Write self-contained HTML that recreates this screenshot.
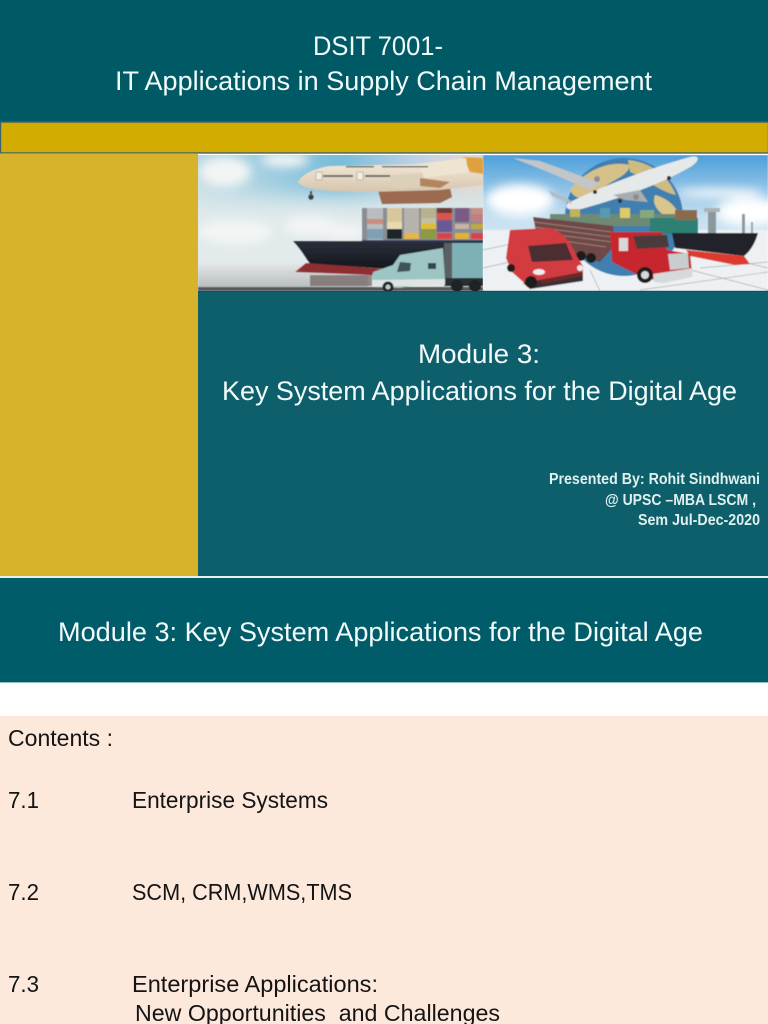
<!DOCTYPE html>
<html lang="en">
<head>
<meta charset="utf-8">
<title>DSIT 7001 - Module 3</title>
<style>
html,body{margin:0;padding:0;background:#fff;width:768px;height:1024px;overflow:hidden}
svg{display:block}
text{font-family:"Liberation Sans",sans-serif}
.w{fill:#f2fafa;font-size:27px}
.s{fill:#dff0ee;font-size:15.5px;font-weight:bold}
.k{fill:#141414;font-size:23.5px}
</style>
</head>
<body>
<svg width="768" height="1024" viewBox="0 0 768 1024" xmlns="http://www.w3.org/2000/svg">
<defs>
<filter id="b1" x="-5%" y="-5%" width="110%" height="110%"><feGaussianBlur stdDeviation="0.6"/></filter>
<filter id="b4" x="-30%" y="-30%" width="160%" height="160%"><feGaussianBlur stdDeviation="5"/></filter>
<filter id="b8" x="-20%" y="-60%" width="140%" height="220%"><feGaussianBlur stdDeviation="9"/></filter>
<linearGradient id="sky1" x1="0" y1="0" x2="0" y2="1"><stop offset="0" stop-color="#b5d6e2"/><stop offset=".45" stop-color="#dfe9eb"/><stop offset="1" stop-color="#e6eaeb"/></linearGradient>
<linearGradient id="sky1b" x1="0" y1="0" x2="1" y2="0"><stop offset="0" stop-color="#7fc0da" stop-opacity="0"/><stop offset=".5" stop-color="#6db9d8" stop-opacity=".9"/><stop offset=".8" stop-color="#c9d3e6" stop-opacity=".8"/><stop offset="1" stop-color="#f4d9c8" stop-opacity=".9"/></linearGradient>
<linearGradient id="sky2" x1="0" y1="0" x2="0" y2="1"><stop offset="0" stop-color="#4e9fda"/><stop offset=".45" stop-color="#c4dff0"/><stop offset="1" stop-color="#f2f5f7"/></linearGradient>
<linearGradient id="hull" x1="0" y1="0" x2="0" y2="1"><stop offset="0" stop-color="#2b2f3a"/><stop offset="1" stop-color="#12151c"/></linearGradient>
<linearGradient id="plane" x1="0" y1="0" x2="0" y2="1"><stop offset="0" stop-color="#f1e7d6"/><stop offset="1" stop-color="#d6c5ad"/></linearGradient>
<linearGradient id="sea" x1="0" y1="0" x2="0" y2="1"><stop offset="0" stop-color="#e6e9ea"/><stop offset="1" stop-color="#b9bdbe"/></linearGradient>
<clipPath id="c1"><rect x="198" y="155" width="285" height="136"/></clipPath>
<clipPath id="c2"><rect x="483" y="155" width="285" height="136"/></clipPath>
</defs>

<!-- backgrounds -->
<rect x="0" y="0" width="768" height="122" fill="#005a66"/>
<rect x="0.5" y="122" width="768" height="31" fill="#d3ac02" stroke="#3e6270" stroke-width="1.4"/>
<rect x="0" y="154" width="198" height="423" fill="#d7b22b"/>
<rect x="198" y="291" width="570" height="286" fill="#0e5f6c"/>
<rect x="198" y="290" width="570" height="2" fill="#0a5460"/>
<rect x="0" y="576" width="768" height="2" fill="#e6f0f0"/>
<rect x="0" y="578" width="768" height="104" fill="#005c68"/>
<rect x="0" y="682" width="768" height="1" fill="#8fc0cc"/>
<rect x="0" y="716" width="768" height="308" fill="#fde9dc"/>

<!-- left picture -->
<g clip-path="url(#c1)">
<rect x="198" y="155" width="285" height="136" fill="url(#sky1)"/>
<rect x="198" y="135" width="285" height="60" fill="url(#sky1b)" filter="url(#b8)"/>
<g filter="url(#b1)">
<g filter="url(#b4)" fill="#f3f5f4">
<ellipse cx="225" cy="172" rx="26" ry="15"/><ellipse cx="285" cy="160" rx="24" ry="7"/>
<ellipse cx="235" cy="232" rx="38" ry="12"/><ellipse cx="310" cy="226" rx="26" ry="10"/><ellipse cx="345" cy="232" rx="22" ry="8"/>
</g>
<rect x="198" y="262" width="170" height="25" fill="url(#sea)"/>
<rect x="198" y="287" width="285" height="4" fill="#54595c"/>
<!-- plane -->
<path d="M378 190 L450 188 L452 197 L440 203 L382 204Z" fill="#9b6a50"/>
<path d="M298 182 C302 174 315 168 330 166 L483 163 L483 185 L440 190 L370 192 C330 192 302 190 298 182Z" fill="url(#plane)"/>
<path d="M463 157 L483 158 L483 174 L470 172Z" fill="#e0a13c"/>
<path d="M417 164 L466 158 L468 172 L425 178Z" fill="#eee4d2"/>
<path d="M390 175 L423 173 L423 187 L392 188Z" fill="#ddd0bb"/>
<path d="M420 178 L450 182 L440 188 L420 186Z" fill="#b4835f"/>
<rect x="323" y="175" width="30" height="2" fill="#6c6a64"/><rect x="365" y="175" width="25" height="2" fill="#6c6a64"/>
<rect x="346" y="166" width="28" height="1.5" fill="#6c6a64"/><rect x="382" y="166" width="46" height="1.5" fill="#6c6a64"/>
<rect x="316" y="172" width="6" height="8" fill="#f4eee2" stroke="#8d877a" stroke-width=".5"/>
<rect x="357" y="172" width="6" height="8" fill="#f4eee2" stroke="#8d877a" stroke-width=".5"/>
<circle cx="311" cy="197" r="2.6" fill="#3a3c3e"/><rect x="310" y="191" width="2" height="5" fill="#555"/>
<!-- containers -->
<rect x="362" y="208" width="121" height="32" fill="#8a8d94"/>
<rect x="367" y="208" width="16" height="32" fill="#b9bdc0"/><rect x="367" y="219" width="16" height="5" fill="#c98e80"/><rect x="367" y="229" width="16" height="10" fill="#7fa0b5"/>
<rect x="387" y="208" width="15" height="14" fill="#d9c79c"/><rect x="387" y="222" width="15" height="7" fill="#e9dab0"/><rect x="387" y="229" width="15" height="10" fill="#1d2529"/>
<rect x="404" y="208" width="15" height="31" fill="#b5b3ac"/><rect x="404" y="233" width="15" height="6" fill="#e5b544"/>
<rect x="421" y="208" width="15" height="10" fill="#b9b08f"/><rect x="421" y="218" width="15" height="5" fill="#c0c2a4"/><rect x="421" y="223" width="15" height="6" fill="#e0bc3e"/><rect x="421" y="229" width="15" height="10" fill="#8d9a45"/>
<rect x="437" y="208" width="15" height="7" fill="#6d3d36"/><rect x="437" y="213" width="15" height="7" fill="#d9534f"/><rect x="437" y="220" width="15" height="12" fill="#6b5a93"/><rect x="437" y="233" width="15" height="6" fill="#d9434a"/>
<rect x="455" y="208" width="14" height="14" fill="#7b5a86"/><rect x="455" y="224" width="14" height="5" fill="#c7b3a7"/><rect x="455" y="233" width="14" height="6" fill="#e0b133"/>
<rect x="471" y="208" width="12" height="6" fill="#c48e87"/><rect x="471" y="214" width="12" height="8" fill="#c08080"/><rect x="471" y="224" width="12" height="5" fill="#bfa93c"/><rect x="471" y="233" width="12" height="6" fill="#dc3f4a"/>
<rect x="362" y="240" width="121" height="6" fill="#3f4a70"/>
<!-- ship -->
<path d="M293 241 L483 241 L483 271 L425 271 L310 264 C305 256 300 248 293 241Z" fill="url(#hull)"/>
<path d="M295 272 L306 263 L400 270 L372 275 Z" fill="#8e2f33"/>
<rect x="310" y="275" width="62" height="11" fill="#6d5e5e" opacity=".7"/>
<!-- truck -->
<rect x="452" y="243" width="31" height="35" fill="#7eb1b6"/>
<rect x="444" y="243" width="8" height="38" fill="#5a6163"/>
<rect x="444" y="278" width="39" height="8" fill="#2b2e31"/>
<path d="M372 278 L373 272 L393 265 L400 255 L443 248 L445 280 L400 288 L376 287Z" fill="#9cc5c4"/>
<path d="M400 262 L411 263 L410 271 L397 272Z" fill="#3e5259"/>
<rect x="428" y="263" width="8" height="6" fill="#36474d"/>
<path d="M372 280 L445 279 L445 285 L374 287Z" fill="#dfe4e2"/>
<circle cx="388" cy="287" r="5.5" fill="#1f2225"/><circle cx="388" cy="287" r="2.5" fill="#c3c8c8"/>
<circle cx="457" cy="286" r="6" fill="#1f2225"/><circle cx="475" cy="286" r="6" fill="#1f2225"/>
</g></g>

<!-- right picture -->
<g clip-path="url(#c2)"><g filter="url(#b1)">
<rect x="483" y="155" width="285" height="136" fill="url(#sky2)"/>
<g filter="url(#b4)" fill="#fff">
<ellipse cx="520" cy="200" rx="34" ry="16"/><ellipse cx="750" cy="212" rx="34" ry="14"/><ellipse cx="720" cy="193" rx="45" ry="4"/>
</g>
<path d="M483 230 H768 V291 H483Z" fill="#eef1f3"/>
<g stroke="#a5acb1" stroke-width=".7" fill="none">
<path d="M483 250 L530 240M483 268 L510 262M700 268 L768 262M640 290 L768 272M700 252 L768 268M660 262 L768 290M590 270 L600 291"/>
</g>
<!-- globe -->
<circle cx="624" cy="217" r="59" fill="#3f7fb0"/>
<path d="M570 190 C585 170 610 160 630 165 C628 178 608 180 600 192 C592 200 575 202 570 190Z" fill="#d6c189"/>
<path d="M628 160 C650 162 668 175 676 195 C660 192 645 178 630 172Z" fill="#cdbb82"/>
<path d="M655 195 C668 198 682 210 678 222 C665 218 650 208 655 195Z" fill="#d8c68c"/>
<!-- airplane -->
<path d="M568 203 C600 187 650 168 690 157 C700 155 700 160 692 166 C660 185 620 198 585 208 C572 212 562 209 568 203Z" fill="#e6e9ea"/>
<path d="M513 158 L540 161 L600 183 L590 190 L548 172Z" fill="#c2c6c8"/>
<path d="M613 195 L640 190 L648 202 L625 200Z" fill="#a9adb0"/>
<path d="M548 190 L570 200 L572 204 L552 196Z" fill="#b6babd"/>
<circle cx="597" cy="179" r="3" fill="#8b8f92"/><circle cx="636" cy="197" r="3" fill="#8b8f92"/>
<circle cx="595" cy="192" r="2" fill="#333"/><circle cx="620" cy="201" r="2" fill="#333"/><circle cx="669" cy="178" r="2" fill="#333"/>
<!-- cargo -->
<rect x="550" y="214" width="125" height="12" fill="#6e8a75"/>
<rect x="570" y="209" width="10" height="8" fill="#c2b25a"/><rect x="600" y="208" width="10" height="10" fill="#5a9ab0"/><rect x="620" y="208" width="10" height="10" fill="#ddcc66"/><rect x="640" y="210" width="14" height="8" fill="#84a97e"/>
<rect x="650" y="218" width="48" height="16" fill="#2f8074"/><rect x="675" y="210" width="22" height="10" fill="#8a6b4e"/>
<!-- ship -->
<path d="M672 233 L758 233 C756 240 752 250 744 256 L675 248Z" fill="#22242a"/>
<path d="M686 250 L744 256 L750 264 L735 265 L690 256Z" fill="#dc3a2e"/>
<rect x="708" y="210" width="8" height="23" fill="#8c979c"/><rect x="704" y="208" width="16" height="4" fill="#a9b3b7"/>
<rect x="742" y="214" width="3" height="19" fill="#8c979c"/><rect x="751" y="222" width="2" height="11" fill="#9aa4a8"/>
<!-- trailer -->
<path d="M533 217 L613 226 L615 245 L600 262 L565 252 L538 240Z" fill="#6e4946"/>
<g stroke="#a88c86" stroke-width=".7"><path d="M534 222 L612 232M534 227 L612 237M535 232 L612 242M536 237 L606 247"/></g>
<circle cx="581" cy="256" r="5" fill="#1b1c1f"/><circle cx="591" cy="258" r="5" fill="#1b1c1f"/>
<!-- red truck -->
<path d="M610 232 L662 232 L667 250 L690 254 L692 272 L655 280 L640 276 L612 262Z" fill="#c8282f"/>
<path d="M633 236 L667 235 L669 247 L637 249Z" fill="#4a3a3a"/>
<rect x="619" y="238" width="9" height="13" fill="#d8d8d6"/>
<path d="M668 254 L688 253 L689 268 L670 270Z" fill="#c8cdd0"/>
<path d="M653 274 L693 268 L692 277 L664 283 L654 282Z" fill="#d6d9da"/>
<circle cx="645" cy="275" r="8" fill="#1b1c1f"/><circle cx="645" cy="275" r="4" fill="#d8d8d8"/>
<!-- van -->
<path d="M510 230 L550 228 C562 232 570 240 576 255 L583 266 L583 280 L530 288 L512 272 L506 258Z" fill="#d33b40"/>
<path d="M528 246 L566 243 L573 260 L532 262Z" fill="#4b2f30"/>
<path d="M523 283 L583 272 L583 281 L530 289Z" fill="#3a2f30"/>
<path d="M540 280 L582 272 L582 276 L542 284Z" fill="#6b2a2c"/>
<circle cx="531" cy="282" r="6" fill="#1a1a1d"/><circle cx="511" cy="268" r="4" fill="#1a1a1d"/>
<ellipse cx="539" cy="272" rx="6" ry="3" fill="#eee"/><ellipse cx="580" cy="268" rx="3" ry="3" fill="#eee"/>
</g></g>

<!-- text -->
<text class="w" x="313" y="55" textLength="130" lengthAdjust="spacingAndGlyphs">DSIT 7001-</text>
<text class="w" x="115" y="90" textLength="537" lengthAdjust="spacingAndGlyphs">IT Applications in Supply Chain Management</text>
<text class="w" x="418" y="363" textLength="122" lengthAdjust="spacingAndGlyphs">Module 3:</text>
<text class="w" x="222" y="400" textLength="515" lengthAdjust="spacingAndGlyphs">Key System Applications for the Digital Age</text>
<text class="s" x="549" y="484" textLength="211" lengthAdjust="spacingAndGlyphs">Presented By: Rohit Sindhwani</text>
<text class="s" x="605" y="505" textLength="151" lengthAdjust="spacingAndGlyphs">@ UPSC –MBA LSCM ,</text>
<text class="s" x="638" y="525" textLength="122" lengthAdjust="spacingAndGlyphs">Sem Jul-Dec-2020</text>
<text class="w" x="58" y="641" textLength="645" lengthAdjust="spacingAndGlyphs">Module 3: Key System Applications for the Digital Age</text>
<text class="k" x="8" y="746" textLength="105" lengthAdjust="spacingAndGlyphs">Contents :</text>
<text class="k" x="8" y="808" textLength="31" lengthAdjust="spacingAndGlyphs">7.1</text>
<text class="k" x="132" y="808" textLength="196" lengthAdjust="spacingAndGlyphs">Enterprise Systems</text>
<text class="k" x="8" y="900" textLength="31" lengthAdjust="spacingAndGlyphs">7.2</text>
<text class="k" x="132" y="900" textLength="220" lengthAdjust="spacingAndGlyphs">SCM, CRM,WMS,TMS</text>
<text class="k" x="8" y="992" textLength="31" lengthAdjust="spacingAndGlyphs">7.3</text>
<text class="k" x="132" y="992" textLength="246" lengthAdjust="spacingAndGlyphs">Enterprise Applications:</text>
<text class="k" x="135" y="1021" textLength="365" lengthAdjust="spacingAndGlyphs" xml:space="preserve">New Opportunities  and Challenges</text>
</svg>
</body>
</html>
